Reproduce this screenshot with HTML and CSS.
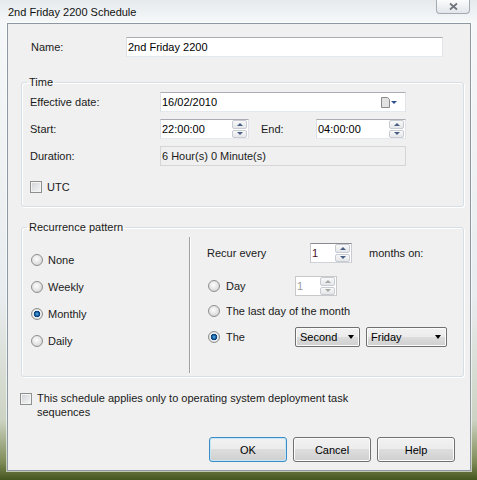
FILE: index.html
```html
<!DOCTYPE html>
<html>
<head lang="en">
    <meta charset="UTF-8">
    <title>2nd Friday 2200 Schedule</title>
    <link rel="stylesheet" href="styles.css">
</head>
<body>
<div class="frame">
    <div class="titlebar">
        <span class="caption">2nd Friday 2200 Schedule</span>
        <span class="close">
            <svg width="11" height="9" viewBox="0 0 11 9"><path d="M2 1.5L9 7.5M9 1.5L2 7.5" stroke="#70747b" stroke-width="1.7" fill="none"/></svg>
        </span>
    </div>
    <div class="client">
        <div class="name-row">
            <span class="lbl">Name:</span>
            <div class="textbox name-box">2nd Friday 2200</div>
        </div>

        <fieldset class="group time-group">
            <legend>Time</legend>
            <div class="time-grid">
                <span>Effective date:</span>
                <div class="textbox wide date-box">
                    <span>16/02/2010</span>
                    <svg width="17" height="11" viewBox="0 0 17 11"><path d="M0.5 0.5H6.5L8.5 2.5V10.5H0.5Z" fill="#e2e2e2" stroke="#8a8a8a"/><path d="M10 4H16L13 7Z" fill="#2d4f8e"/></svg>
                </div>
                <span>Start:</span>
                <div class="textbox spin">
                    <span>22:00:00</span>
                    <div class="spinner"><span class="up"></span><span class="down"></span></div>
                </div>
                <span class="end-lbl">End:</span>
                <div class="textbox spin">
                    <span>04:00:00</span>
                    <div class="spinner"><span class="up"></span><span class="down"></span></div>
                </div>
                <span>Duration:</span>
                <div class="readonly wide">6 Hour(s) 0 Minute(s)</div>
            </div>
            <div class="check-row utc"><span class="checkbox"></span>UTC</div>
        </fieldset>

        <fieldset class="group recur-group">
            <legend>Recurrence pattern</legend>
            <div class="recur">
                <div class="recur-types">
                    <div class="opt"><span class="radio"></span>None</div>
                    <div class="opt"><span class="radio"></span>Weekly</div>
                    <div class="opt"><span class="radio checked"></span>Monthly</div>
                    <div class="opt"><span class="radio"></span>Daily</div>
                </div>
                <div class="recur-detail">
                    <div class="recur-every">
                        <span class="lbl">Recur every</span>
                        <div class="textbox spin small-spin focus">
                            <span>1</span>
                            <div class="spinner"><span class="up"></span><span class="down"></span></div>
                        </div>
                        <span class="unit">months on:</span>
                    </div>
                    <div class="opt day-row">
                        <span class="opt-wide"><span class="radio"></span>Day</span>
                        <div class="textbox spin small-spin disabled">
                            <span>1</span>
                            <div class="spinner"><span class="up"></span><span class="down"></span></div>
                        </div>
                    </div>
                    <div class="opt last-row">
                        <span class="opt-wide"><span class="radio"></span>The last day of the month</span>
                    </div>
                    <div class="opt the-row">
                        <span class="opt-wide"><span class="radio checked"></span>The</span>
                        <div class="combo combo-week">Second</div>
                        <div class="combo combo-day">Friday</div>
                    </div>
                </div>
            </div>
        </fieldset>

        <div class="check-row os-only">
            <span class="checkbox"></span>
            <span class="text">This schedule applies only to operating system deployment task sequences</span>
        </div>

        <div class="buttons">
            <button class="btn default">OK</button>
            <button class="btn">Cancel</button>
            <button class="btn">Help</button>
        </div>
    </div>
</div>
</body>
</html>
```

FILE: styles.css
```css
* {
    margin: 0;
    padding: 0;
    box-sizing: border-box;
}

body {
    width: 477px;
    height: 480px;
    overflow: hidden;
    font: 11px/14px "Liberation Sans", Arial, sans-serif;
    color: #1a1a1a;
    background: linear-gradient(to bottom, #e6eaed 0, #f5f7f8 22px, #e9ecee 300px, #cdd3c3 420px, #7f8c57 462px, #46561f 480px);
}

.frame {
    height: 480px;
    display: flex;
    flex-direction: column;
    padding: 0 6px 9px 7px;
}

/* title bar */
.titlebar {
    height: 23px;
    display: flex;
    justify-content: space-between;
    align-items: flex-start;
}

.caption {
    padding: 5px 0 0 1px;
    color: #111;
}

.close {
    width: 34px;
    height: 14px;
    margin-right: 1px;
    border: 1px solid #a4abb3;
    border-top: 0;
    border-radius: 0 0 4px 4px;
    background: linear-gradient(#fbfcfc, #e2e6ea);
    display: flex;
    align-items: center;
    justify-content: center;
}

.client {
    flex: 1;
    border: 1px solid #8e98a2;
    box-shadow: 0 0 0 1px rgba(255, 255, 255, .6);
    background: #f0f0f0;
    padding: 13px 6px 0 13px;
}

/* controls */
.textbox {
    height: 20px;
    background: #fff;
    border: 1px solid;
    border-color: #abadb3 #e2e3ea #e3e9ef #dbdfe6;
    padding-left: 1px;
    display: flex;
    align-items: center;
    justify-content: space-between;
    color: #000;
}

.readonly {
    height: 20px;
    border: 1px solid #d5d5d5;
    background: #f0f0f0;
    padding-left: 1px;
    display: flex;
    align-items: center;
}

.spinner {
    width: 15px;
    height: 18px;
    display: flex;
    flex-direction: column;
    gap: 1px;
    margin-right: 1px;
}

.spinner span {
    flex: 1;
    border: 1px solid #c7ccd3;
    border-radius: 2px;
    background: linear-gradient(#f9f9f9, #e4e6e9);
    display: flex;
    align-items: center;
    justify-content: center;
}

.spinner .up::before {
    content: "";
    border-left: 3px solid transparent;
    border-right: 3px solid transparent;
    border-bottom: 3px solid #4a5f86;
}

.spinner .down::before {
    content: "";
    border-left: 3px solid transparent;
    border-right: 3px solid transparent;
    border-top: 3px solid #4a5f86;
}

.disabled {
    border-color: #c9c9c9;
    color: #9a9a9a;
}

.disabled .spinner .up::before {
    border-bottom-color: #a6a6a6;
}

.disabled .spinner .down::before {
    border-top-color: #a6a6a6;
}

.focus {
    border-color: #8a8c92 #c8cacf #cfd3d8 #c2c5ca;
    color: #4b0f1f;
}

.checkbox {
    flex: none;
    width: 12px;
    height: 12px;
    border: 1px solid #8e8f8f;
    background: linear-gradient(135deg, #cfd2d6, #f7f7f7);
    box-shadow: inset 0 0 0 1px #f4f4f4;
    margin-right: 5px;
}

.radio {
    flex: none;
    display: inline-block;
    width: 12px;
    height: 12px;
    border-radius: 50%;
    border: 1px solid #8e8f8f;
    background: radial-gradient(circle at 45% 40%, #fdfdfd 0, #e8e8e8 45%, #c8c8c8 100%);
    margin-right: 5px;
}

.radio.checked {
    background: radial-gradient(circle at 50% 50%, #6fb6ea 0, #2270b4 1.4px, #0b3c74 3px, #f6f6f6 3.6px, #e4e4e4 4.6px, #c8c8c8 100%);
}

.combo {
    height: 20px;
    border: 1px solid #707070;
    border-radius: 2px;
    background: linear-gradient(#f2f2f2 0, #ebebeb 50%, #dddddd 50%, #cfcfcf 100%);
    box-shadow: inset 0 0 0 1px #fcfcfc;
    display: flex;
    align-items: center;
    justify-content: space-between;
    padding: 0 5px 0 4px;
    color: #000;
}

.combo::after {
    content: "";
    border-left: 3.5px solid transparent;
    border-right: 3.5px solid transparent;
    border-top: 4px solid #000;
}

/* name */
.name-row {
    display: flex;
    align-items: center;
    height: 20px;
    padding-left: 10px;
}

.name-row .lbl {
    width: 95px;
}

.name-box {
    width: 317px;
}

/* group boxes */
.group {
    border: 1px solid #d5dfe5;
    border-radius: 3px;
    box-shadow: inset 1px 1px 0 #fff, 1px 1px 0 #fff;
}

.group legend {
    padding: 0 2px;
    margin-left: -3px;
    line-height: 14px;
}

.time-group {
    margin-top: 18px;
    padding: 3px 8px 12px 8px;
}

.time-grid {
    display: grid;
    grid-template-columns: 130px 89px 67px 90px;
    grid-auto-rows: 20px;
    row-gap: 7px;
    align-items: center;
}

.time-grid .wide {
    grid-column: 2 / 5;
}

.date-box {
    padding-right: 7px;
}

.end-lbl {
    padding-left: 12px;
}

.check-row {
    display: flex;
    align-items: center;
}

.utc {
    margin-top: 14px;
    height: 14px;
}

.recur-group {
    margin-top: 13px;
    padding: 3px 0 3px 8px;
}

.recur {
    display: flex;
    height: 136px;
}

.recur-types {
    width: 160px;
    border-right: 1px solid #a0a0a0;
    box-shadow: 1px 0 0 #fff;
    padding: 13px 0 0 1px;
    display: flex;
    flex-direction: column;
    gap: 7px;
}

.opt {
    display: flex;
    align-items: center;
    height: 20px;
}

.recur-detail {
    padding: 6px 0 0 17px;
}

.recur-every {
    display: flex;
    align-items: center;
    height: 20px;
}

.recur-every .lbl {
    width: 103px;
}

.small-spin {
    width: 42px;
}

.recur-every .unit {
    margin-left: 17px;
}

.opt-wide {
    display: flex;
    align-items: center;
    width: 88px;
    padding-left: 1px;
    white-space: nowrap;
}

.opt-wide .radio {
    margin-right: 6px;
}

.day-row {
    margin-top: 13px;
}

.last-row {
    margin-top: 5px;
}

.the-row {
    margin-top: 6px;
}

.combo-week {
    width: 65px;
}

.combo-day {
    width: 81px;
    margin-left: 6px;
}

/* bottom */
.os-only {
    margin: 14px 0 0 -1px;
    align-items: flex-start;
}

.os-only .checkbox {
    margin-top: 2px;
}

.os-only .text {
    width: 320px;
}

.buttons {
    display: flex;
    justify-content: flex-end;
    gap: 6px;
    margin-top: 18px;
    padding-right: 9px;
}

.btn {
    width: 78px;
    height: 25px;
    border: 1px solid #707070;
    border-radius: 3px;
    background: linear-gradient(#f2f2f2 0, #ebebeb 50%, #dddddd 50%, #cfcfcf 100%);
    box-shadow: inset 0 0 0 1px #fcfcfc;
    font: inherit;
    color: #000;
}

.btn.default {
    border-color: #3c8dc6;
    box-shadow: inset 0 0 0 1px #c4e6f8;
}
```
